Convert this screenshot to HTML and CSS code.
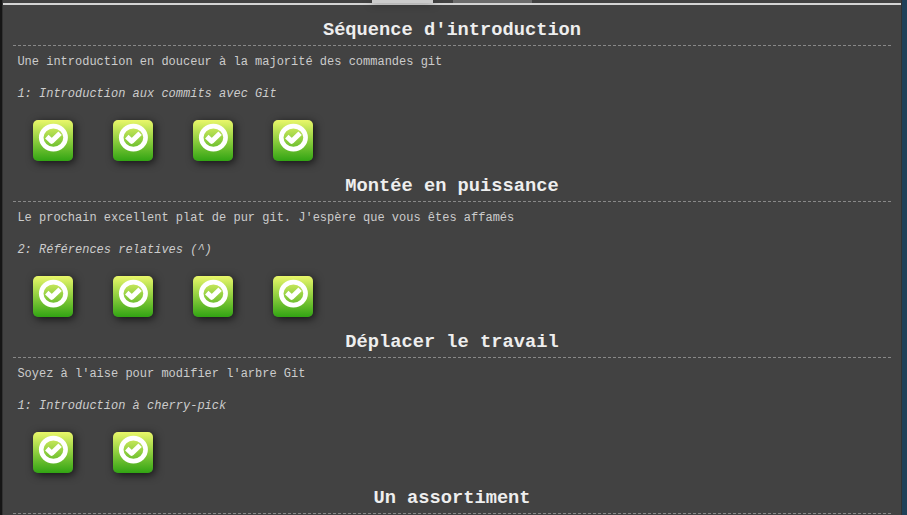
FILE: index.html
```html
<!DOCTYPE html>
<html lang="fr">
<head>
<meta charset="utf-8">
<title>Niveaux</title>
<link rel="stylesheet" href="styles.css">
</head>
<body>
<svg class="defs" aria-hidden="true"><symbol id="check" viewBox="0 0 30 30"><ellipse cx="15.4" cy="14.6" rx="12.2" ry="11.5" fill="none" stroke="#fff" stroke-width="4.6"/><path d="M8.8 13.7l5 4.6 8.3-8" fill="none" stroke="#fff" stroke-width="5" stroke-linejoin="round"/></symbol></svg>
<div class="window">
<nav class="tabs"><span class="tab active"></span><span class="tab"></span></nav>
<main class="content">
<section class="series"><h2>Séquence d'introduction</h2><p class="about">Une introduction en douceur à la majorité des commandes git</p><p class="level">1: Introduction aux commits avec Git</p>
<div class="icons"><a class="icon"><svg><use href="#check"/></svg></a><a class="icon"><svg><use href="#check"/></svg></a><a class="icon"><svg><use href="#check"/></svg></a><a class="icon"><svg><use href="#check"/></svg></a></div></section>
<section class="series"><h2>Montée en puissance</h2><p class="about">Le prochain excellent plat de pur git. J'espère que vous êtes affamés</p><p class="level">2: Références relatives (^)</p>
<div class="icons"><a class="icon"><svg><use href="#check"/></svg></a><a class="icon"><svg><use href="#check"/></svg></a><a class="icon"><svg><use href="#check"/></svg></a><a class="icon"><svg><use href="#check"/></svg></a></div></section>
<section class="series"><h2>Déplacer le travail</h2><p class="about">Soyez à l'aise pour modifier l'arbre Git</p><p class="level">1: Introduction à cherry-pick</p>
<div class="icons"><a class="icon"><svg><use href="#check"/></svg></a><a class="icon"><svg><use href="#check"/></svg></a></div></section>
<section class="series"><h2>Un assortiment</h2></section>
</main>
</div>
</body>
</html>
```

FILE: styles.css
```css
* { box-sizing: border-box; }
body { margin: 0; height: 515px; overflow: hidden; background: linear-gradient(90deg, #161616 50%, #1f4058 50%); font-family: "Courier New", "Liberation Mono", monospace; color: #ccc; }
.defs { position: absolute; width: 0; height: 0; }
.window { height: 515px; margin: 0 5px 0 2px; background: #424242; border: solid #323232; border-width: 0 1px; overflow: hidden; }
.tabs { display: flex; gap: 20px; height: 5px; padding-left: 369px; border-bottom: 2px solid #d4d4d4; }
.tab { width: 79px; height: 3px; background: #6c6c6c; }
.tab.active { width: 61px; background: #ccc; box-shadow: 0 0 8px rgba(0, 0, 0, .5); }
.content { padding: 9px 10px 0 10px; }
.series { height: 156px; }
h2 { margin: 0; height: 32px; border-bottom: 1px dashed #888; text-align: center; font-size: 18.72px; line-height: 32px; color: #eee; }
p { margin: 0; padding-left: 4.4px; height: 32px; line-height: 32px; font-size: 12px; white-space: pre; }
.level { font-style: italic; }
.icons { display: flex; gap: 40px; padding: 10px 20px; }
.icon { width: 40px; height: 41px; border-radius: 5px; padding: 3px 5px; background: linear-gradient(#eaf76a, #31a413); box-shadow: 2px 2px 8px rgba(0, 0, 0, .7); }
.icon svg { display: block; width: 30px; height: 30px; }
```
